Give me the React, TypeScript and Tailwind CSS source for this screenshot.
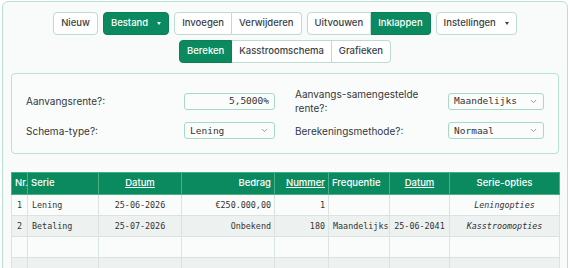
import { ChevronDown } from "lucide-react";

const sans = "font-['Inter','Liberation_Sans',sans-serif]";
const mono = "font-['DejaVu_Sans_Mono','Liberation_Mono',monospace]";

const btn =
  "h-[23px] px-[7px] flex items-center border border-[#bcdcd1] bg-white text-[#3a3f44] text-[9.5px] font-medium";
const btnGreen =
  "h-[23px] px-[7px] flex items-center border border-[#0b7f57] bg-[#0c8a5f] text-white text-[9.5px] font-medium";

function Caret() {
  return (
    <span className="ml-[9px] w-0 h-0 border-l-[2px] border-r-[2px] border-t-[3px] border-l-transparent border-r-transparent border-t-current" />
  );
}

function Select({ value, width }: { value: string; width: string }) {
  return (
    <div
      className={`${width} h-[17px] flex items-center justify-between pl-[5px] pr-[5px] border border-[#a6d9c6] rounded-[3px] bg-[#fbfdfc]`}
    >
      <span className={`${mono} text-[9.5px] text-[#333]`}>{value}</span>
      <ChevronDown className="w-[9px] h-[9px] text-[#777]" strokeWidth={2} />
    </div>
  );
}

const rows = [
  {
    nr: "1",
    serie: "Lening",
    datum: "25-06-2026",
    bedrag: "€250.000,00",
    nummer: "1",
    freq: "",
    datum2: "",
    opties: "Leningopties",
  },
  {
    nr: "2",
    serie: "Betaling",
    datum: "25-07-2026",
    bedrag: "Onbekend",
    nummer: "180",
    freq: "Maandelijks",
    datum2: "25-06-2041",
    opties: "Kasstroomopties",
  },
  { nr: "", serie: "", datum: "", bedrag: "", nummer: "", freq: "", datum2: "", opties: "" },
  { nr: "", serie: "", datum: "", bedrag: "", nummer: "", freq: "", datum2: "", opties: "" },
  { nr: "", serie: "", datum: "", bedrag: "", nummer: "", freq: "", datum2: "", opties: "" },
];

export default function App() {
  const th = "h-[22px] border border-[#4aae87] font-medium text-[9.5px] text-white px-[3px]";
  const td = `h-[21px] border border-[#dbe3e1] ${mono} text-[8.4px] text-[#333] px-[4px]`;

  return (
    <div className={`w-[570px] h-[268px] overflow-hidden bg-white ${sans}`}>
      <div className="mx-[2px] mt-[1px] h-[300px] border border-[#b6e3d3] rounded-[6px] bg-[#f9fbfb] px-[8px] pt-[10px]">
        {/* toolbar */}
        <div className="flex justify-center gap-[5px]">
          <button className={`${btn} rounded-[4px]`}>Nieuw</button>
          <button className={`${btnGreen} rounded-[4px]`}>
            Bestand
            <Caret />
          </button>
          <div className="flex">
            <button className={`${btn} rounded-l-[4px]`}>Invoegen</button>
            <button className={`${btn} rounded-r-[4px] border-l-0`}>Verwijderen</button>
          </div>
          <div className="flex">
            <button className={`${btn} rounded-l-[4px]`}>Uitvouwen</button>
            <button className={`${btnGreen} rounded-r-[4px] border-l-0`}>Inklappen</button>
          </div>
          <button className={`${btn} rounded-[4px]`}>
            Instellingen
            <Caret />
          </button>
        </div>
        <div className="mt-[5px] flex justify-center">
          <button className={`${btnGreen} rounded-l-[4px]`}>Bereken</button>
          <button className={`${btn} border-l-0`}>Kasstroomschema</button>
          <button className={`${btn} rounded-r-[4px] border-l-0`}>Grafieken</button>
        </div>

        {/* form */}
        <div className="mt-[10px] border border-[#b6e3d3] rounded-[4px] bg-[#fafcfc] px-[14px] pt-[13px] pb-[14px] grid grid-cols-2 gap-x-[20px] gap-y-[7px] text-[10px] leading-[14px] text-[#33383d]">
          <div className="flex items-center justify-between">
            <span>Aanvangsrente?:</span>
            <div className="w-[91px] h-[17px] flex items-center justify-end pr-[5px] border border-[#a6d9c6] rounded-[3px] bg-[#fbfdfc]">
              <span className={`${mono} text-[9.5px] text-[#333]`}>5,5000%</span>
            </div>
          </div>
          <div className="flex items-center justify-between">
            <span className="max-w-[135px]">Aanvangs-samengestelde rente?:</span>
            <Select value="Maandelijks" width="w-[96px]" />
          </div>
          <div className="flex items-center justify-between">
            <span>Schema-type?:</span>
            <Select value="Lening" width="w-[91px]" />
          </div>
          <div className="flex items-center justify-between">
            <span>Berekeningsmethode?:</span>
            <Select value="Normaal" width="w-[96px]" />
          </div>
        </div>

        {/* table */}
        <table className="mt-[18px] w-[548px] table-fixed border-collapse">
          <colgroup>
            <col className="w-[16px]" />
            <col className="w-[71px]" />
            <col className="w-[83px]" />
            <col className="w-[93px]" />
            <col className="w-[54px]" />
            <col className="w-[61px]" />
            <col className="w-[60px]" />
            <col className="w-[110px]" />
          </colgroup>
          <thead className="bg-[#0c8a5f]">
            <tr>
              <th className={`${th} text-left`}>Nr.</th>
              <th className={`${th} text-left`}>Serie</th>
              <th className={`${th} text-center underline`}>Datum</th>
              <th className={`${th} text-right`}>Bedrag</th>
              <th className={`${th} text-right underline`}>Nummer</th>
              <th className={`${th} text-left`}>Frequentie</th>
              <th className={`${th} text-center underline`}>Datum</th>
              <th className={`${th} text-center`}>Serie-opties</th>
            </tr>
          </thead>
          <tbody>
            {rows.map((r, i) => (
              <tr key={i} className={i % 2 === 0 ? "bg-[#fafcfc]" : "bg-[#edf2f1]"}>
                <td className={`${td} text-center px-0`}>{r.nr}</td>
                <td className={`${td} text-left`}>{r.serie}</td>
                <td className={`${td} text-center`}>{r.datum}</td>
                <td className={`${td} text-right pr-[3px]`}>{r.bedrag}</td>
                <td className={`${td} text-right pr-[3px]`}>{r.nummer}</td>
                <td className={`${td} text-left`}>{r.freq}</td>
                <td className={`${td} text-center`}>{r.datum2}</td>
                <td className={`${td} text-center italic`}>{r.opties}</td>
              </tr>
            ))}
          </tbody>
        </table>
      </div>
    </div>
  );
}
